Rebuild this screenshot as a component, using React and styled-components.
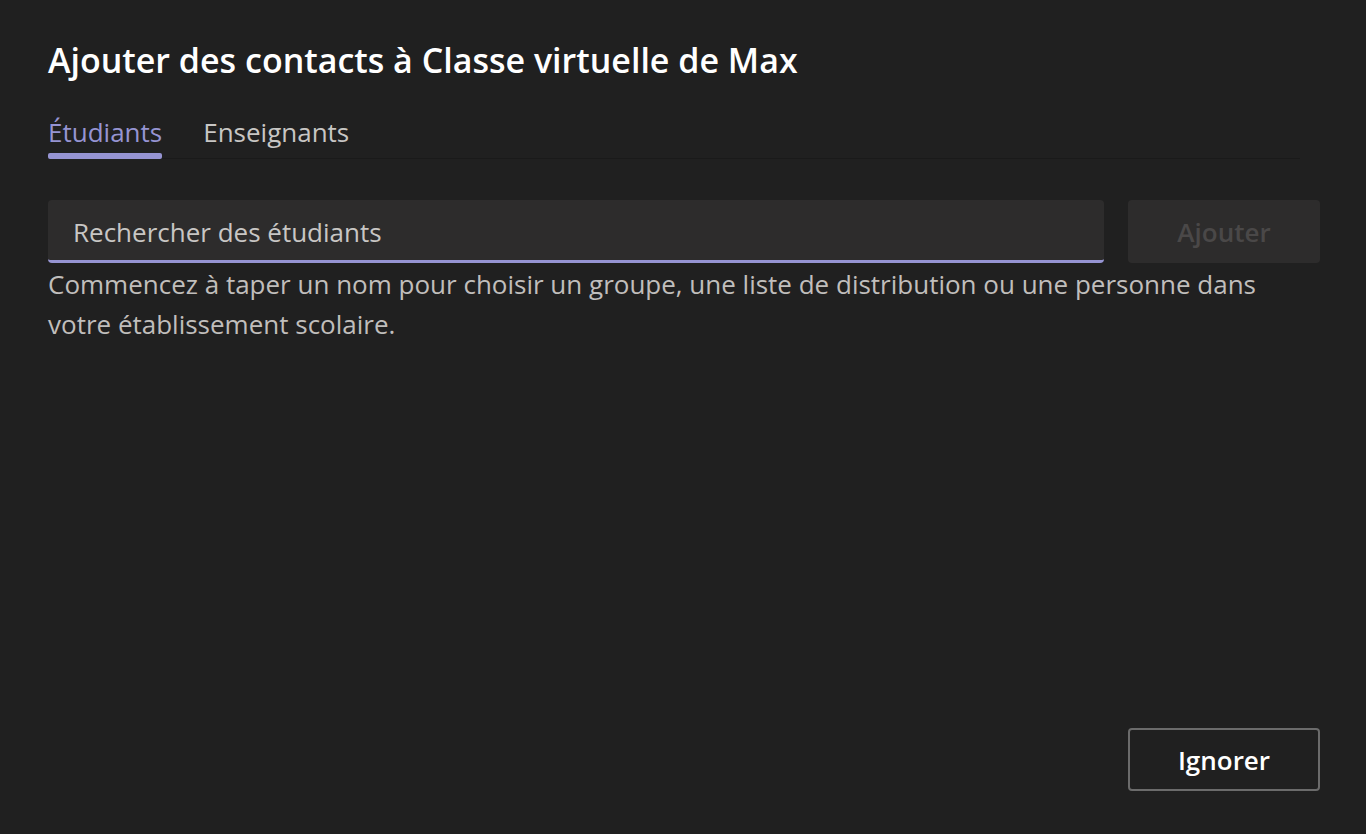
import React from "react";
import styled, { createGlobalStyle } from "styled-components";

const Global = createGlobalStyle`
  html, body { margin: 0; padding: 0; background: #202020; }
  body { font-family: "Open Sans", "Noto Sans", sans-serif; }
  * { box-sizing: border-box; }
`;

const Dialog = styled.div`
  min-height: 100vh;
  display: flex;
  flex-direction: column;
  padding: 40px 46px 43px 48px;
  background: #202020;
  color: #ffffff;
`;

const Title = styled.h1`
  margin: 0;
  font-size: 34px;
  line-height: 40px;
  font-weight: 600;
  color: #ffffff;
`;

const TabList = styled.div`
  display: flex;
  gap: 41px;
  margin-top: 36px;
  margin-right: 20px;
  border-bottom: 1px solid #1a1a1a;
`;

const Tab = styled.div`
  position: relative;
  font-size: 26px;
  line-height: 32px;
  padding-bottom: 10px;
  color: ${(p) => (p.$active ? "#9694d2" : "#c8c6c4")};
  &::after {
    content: "";
    display: ${(p) => (p.$active ? "block" : "none")};
    position: absolute;
    left: 0;
    right: 0;
    bottom: -1px;
    height: 6px;
    border-radius: 2px;
    background: #9694d2;
  }
`;

const SearchRow = styled.div`
  display: flex;
  gap: 24px;
  margin-top: 41px;
`;

const SearchBox = styled.div`
  flex: 1;
  height: 63px;
  display: flex;
  align-items: center;
  padding: 4px 24px 0 25px;
  background: #2d2c2c;
  border-radius: 4px;
  border-bottom: 3px solid #9694d2;
  font-size: 26px;
  color: #c8c6c4;
`;

const Button = styled.button`
  width: 192px;
  height: 63px;
  border-radius: 4px;
  font-family: inherit;
  font-size: 26px;
  font-weight: 600;
  cursor: pointer;
  padding: 0;
  background: ${(p) => (p.$outline ? "transparent" : "#2d2c2c")};
  border: ${(p) => (p.$outline ? "2px solid #6b6b6b" : "none")};
  color: ${(p) => (p.$disabled ? "#4a4848" : "#ffffff")};
`;

const Help = styled.p`
  margin: 1px 0 0;
  font-size: 26px;
  line-height: 40px;
  color: #c0bebc;
`;

const Footer = styled.div`
  margin-top: auto;
  display: flex;
  justify-content: flex-end;
`;

export default function App() {
  return (
    <>
      <Global />
      <Dialog>
        <Title>Ajouter des contacts à Classe virtuelle de Max</Title>
        <TabList>
          <Tab $active>Étudiants</Tab>
          <Tab>Enseignants</Tab>
        </TabList>
        <SearchRow>
          <SearchBox>Rechercher des étudiants</SearchBox>
          <Button $disabled>Ajouter</Button>
        </SearchRow>
        <Help>
          Commencez à taper un nom pour choisir un groupe, une liste de distribution ou une personne dans votre établissement scolaire.
        </Help>
        <Footer>
          <Button $outline>Ignorer</Button>
        </Footer>
      </Dialog>
    </>
  );
}
